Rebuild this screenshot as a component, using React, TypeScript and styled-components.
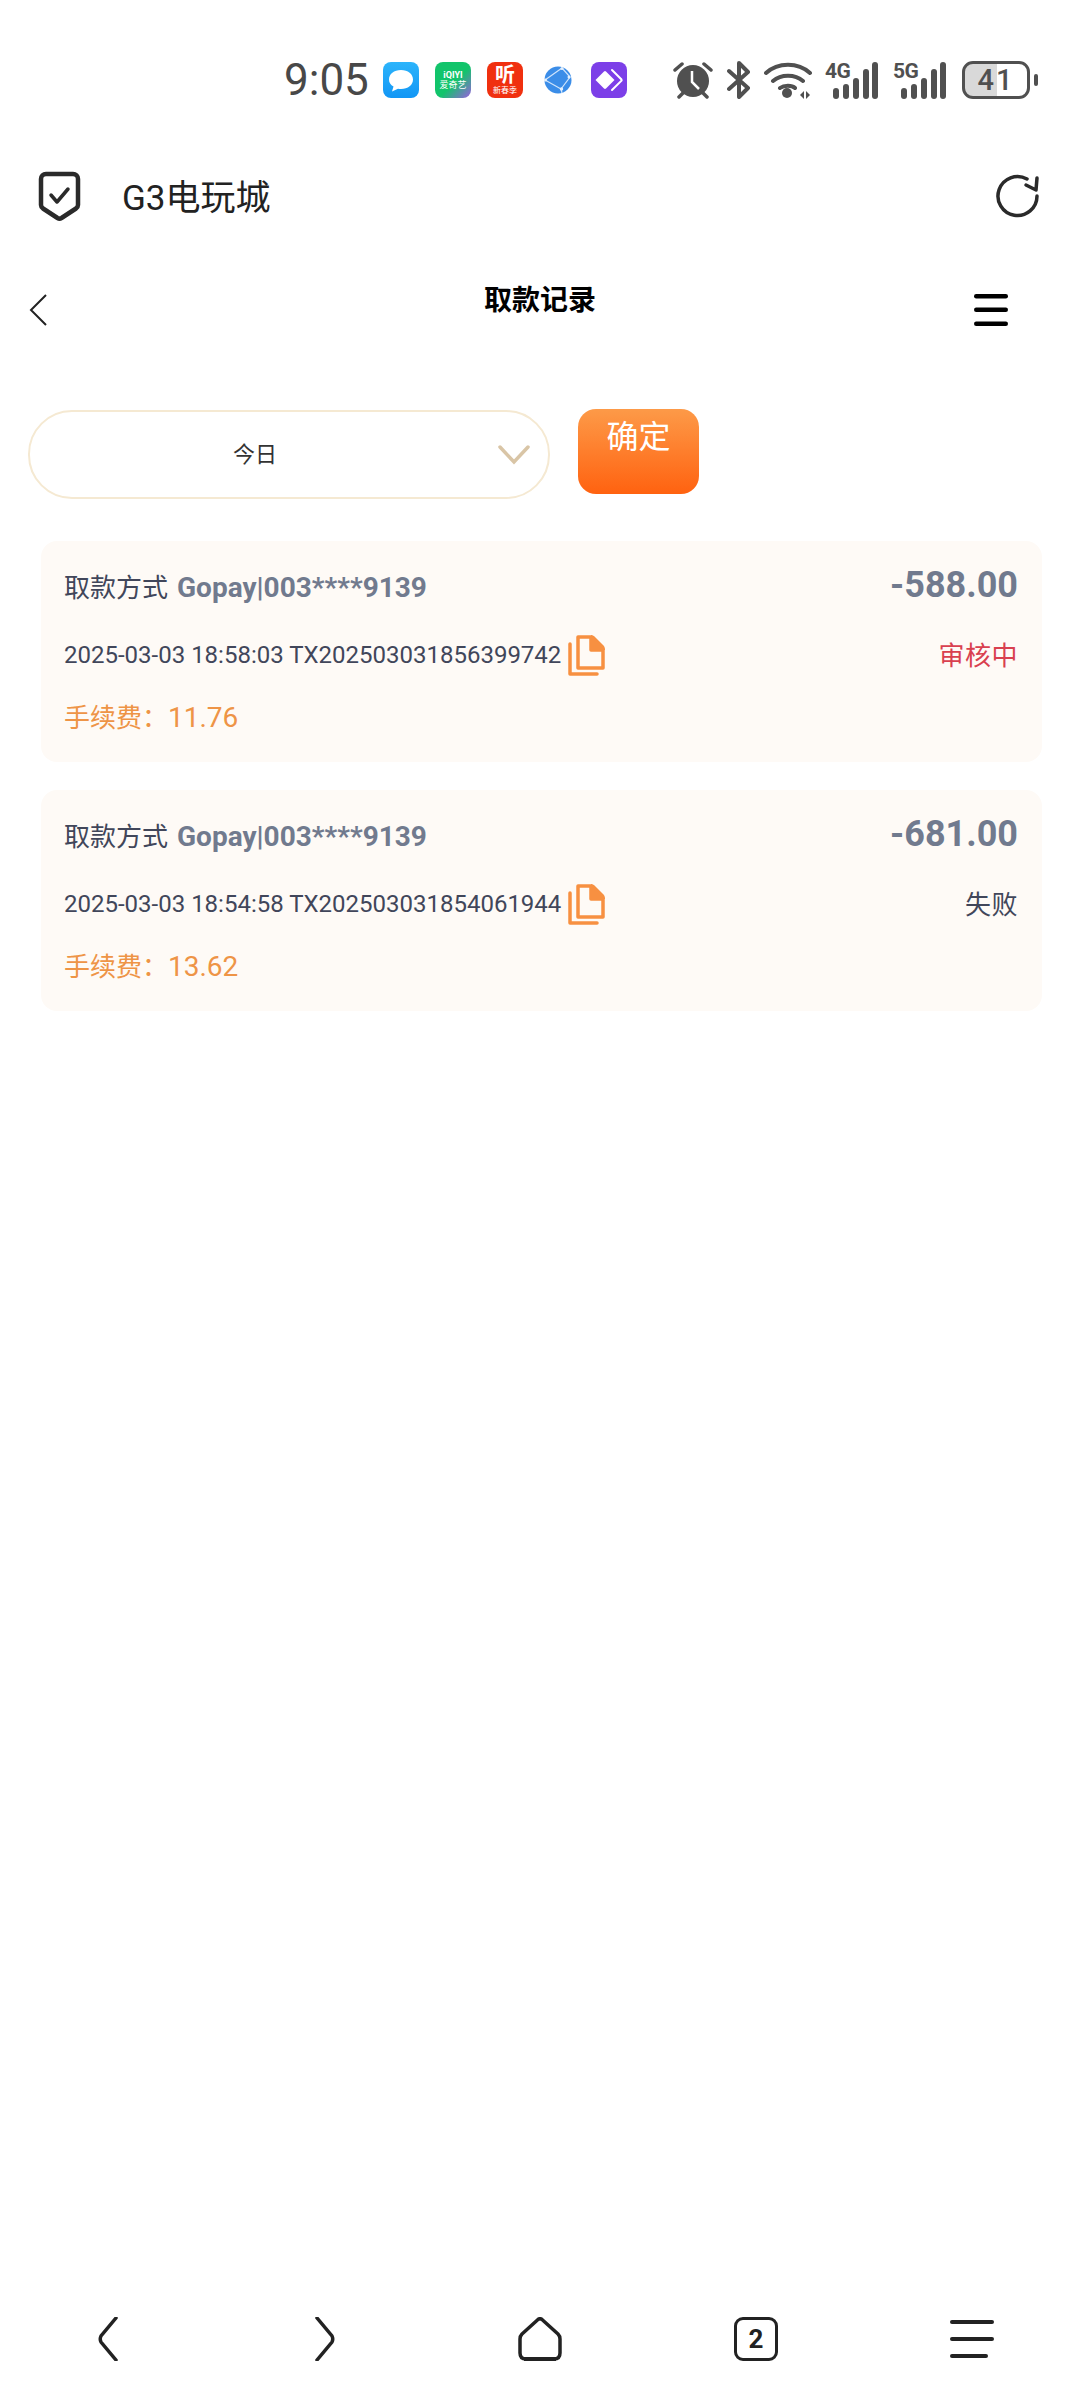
import React, {FC} from 'react';
import styled, {createGlobalStyle} from 'styled-components';

const GlobalStyle = createGlobalStyle`
  html, body {
    margin: 0;
    padding: 0;
    background: #fff;
  }
  * {
    box-sizing: border-box;
  }
`;

const FONT = `Roboto, "Noto Sans CJK SC", sans-serif`;

const Page = styled.div`
  width: 1080px;
  height: 2400px;
  display: flex;
  flex-direction: column;
  background: #fff;
  font-family: ${FONT};
  overflow: hidden;
`;

/* status bar */
const StatusBar = styled.div`
  height: 160px;
  display: flex;
  align-items: center;
  padding-left: 284px;
`;

const Clock = styled.div`
  width: 99px;
  font-size: 44px;
  line-height: 44px;
  color: #484848;
`;

const AppIcons = styled.div`
  display: flex;
  align-items: center;
`;

const AppTile = styled.div<{$bg: string; $gap?: number}>`
  width: 36px;
  height: 36px;
  border-radius: 8px;
  background: ${p => p.$bg};
  margin-right: ${p => p.$gap ?? 16}px;
  display: flex;
  flex-direction: column;
  align-items: center;
  justify-content: center;
  color: #fff;
`;

const TileMain = styled.span<{$size: number}>`
  font-size: ${p => p.$size}px;
  line-height: ${p => p.$size + 1}px;
  font-weight: 700;
`;

const TileSub = styled.span<{$size: number}>`
  font-size: ${p => p.$size}px;
  line-height: ${p => p.$size + 1}px;
`;

const SystemIcons = styled.div`
  display: flex;
  align-items: center;
  margin-left: 46px;
`;

const SysSlot = styled.div<{$gap: number}>`
  display: flex;
  margin-right: ${p => p.$gap}px;
`;

const Signal = styled.div`
  position: relative;
  width: 53px;
  height: 38px;
  display: flex;
`;

const SignalLabel = styled.span`
  position: absolute;
  left: 0;
  top: 0;
  font-size: 21px;
  line-height: 20px;
  font-weight: 700;
  letter-spacing: -0.5px;
  color: #505050;
`;

const Battery = styled.div`
  width: 68px;
  height: 38px;
  border: 3px solid #505050;
  border-radius: 11px;
  background: linear-gradient(90deg, #d9d9d9 52%, #fff 52%);
  color: #505050;
  font-size: 29px;
  line-height: 32px;
  font-weight: 500;
  letter-spacing: 2px;
  text-align: center;
`;

const BatteryNub = styled.div`
  width: 4px;
  height: 12px;
  margin-left: 4px;
  border-radius: 2px;
  background: #505050;
`;

/* browser title row */
const AppHeader = styled.div`
  height: 72px;
  display: flex;
  align-items: center;
  padding: 0 40px 0 38px;
`;

const AppTitle = styled.div`
  flex: 1;
  margin-left: 41px;
  margin-bottom: 4px;
  font-size: 35px;
  color: #222;
`;

/* page heading */
const PageHeader = styled.div`
  height: 140px;
  display: flex;
  align-items: center;
  justify-content: space-between;
  padding: 16px 72px 0 29px;
  position: relative;
`;

const PageTitle = styled.div`
  position: absolute;
  left: 0;
  right: 0;
  top: 50px;
  text-align: center;
  font-size: 28px;
  line-height: 38px;
  font-weight: 700;
  color: #000;
`;

const FilterRow = styled.div`
  display: flex;
  align-items: flex-start;
  gap: 28px;
  padding: 37px 0 0 28px;
`;

const Select = styled.div`
  width: 522px;
  height: 89px;
  margin-top: 1px;
  border: 2px solid #f5e9d2;
  border-radius: 44px;
  display: flex;
  align-items: center;
  padding: 0 18px 0 0;
`;

const SelectValue = styled.div`
  flex: 1;
  padding-right: 18px;
  padding-bottom: 6px;
  text-align: center;
  font-size: 22px;
  color: #333;
`;

const ConfirmButton = styled.button`
  width: 121px;
  height: 85px;
  border: none;
  border-radius: 18px;
  padding: 6px 0 0;
  display: flex;
  justify-content: center;
  align-items: flex-start;
  background: linear-gradient(180deg, #fd9a48 0%, #ff6210 100%);
  color: #fff;
  font-family: ${FONT};
  font-size: 32px;
  line-height: 44px;
`;

const CardList = styled.div`
  display: flex;
  flex-direction: column;
  gap: 28px;
  padding: 42px 38px 0 41px;
`;

const Card = styled.div`
  height: 221px;
  padding: 18px 24px 0 23px;
  border-radius: 16px;
  background: #fefaf6;
  display: grid;
  grid-template-rows: 52px 64px 32px;
  row-gap: 12px;
`;

const CardRow = styled.div`
  display: flex;
  align-items: center;
  justify-content: space-between;
`;

const Method = styled.div`
  font-size: 26px;
  color: #41465a;
`;

const Account = styled.span`
  margin-left: 9px;
  font-size: 28px;
  font-weight: 700;
  color: #717a8e;
`;

const Amount = styled.div`
  font-size: 36px;
  font-weight: 700;
  color: #717a8e;
`;

const Meta = styled.div`
  display: flex;
  align-items: center;
  gap: 7px;
  font-size: 24px;
  color: #41465a;
`;

const Status = styled.div<{$pending?: boolean}>`
  margin-bottom: 3px;
  font-size: 26px;
  letter-spacing: 0.5px;
  color: ${p => (p.$pending ? '#d9404f' : '#41465a')};
`;

const Fee = styled.div`
  font-size: 26px;
  color: #ee9446;
`;

const FeeValue = styled.span`
  font-size: 28px;
`;

const BottomNav = styled.div`
  margin-top: auto;
  height: 83px;
  display: flex;
  align-items: flex-start;
  padding-left: 98px;
`;

const NavSlot = styled.div<{$width: number}>`
  width: ${p => p.$width}px;
  height: 44px;
  display: flex;
`;

const TabCount = styled.div`
  width: 44px;
  height: 44px;
  border: 3px solid #222;
  border-radius: 9px;
  display: flex;
  align-items: center;
  justify-content: center;
  font-size: 26px;
  font-weight: 700;
  color: #222;
`;

/* hand drawn icons */
const MessageIcon = () => (
  <svg width="28" height="28" viewBox="0 0 28 28">
    <path d="M14 4c7 0 12 4 12 9.500S21 23 14 23c-1 0-2 0-3-.3L5 25.500l1.500-5C3.500 19 2 16.500 2 13.500 2 8 7 4 14 4z" fill="#fff" />
  </svg>
);

const GlobeIcon = () => (
  <svg width="28" height="28" viewBox="0 0 28 28">
    <circle cx="14" cy="14" r="13.500" fill="#3b8de8" />
    <path d="M1 14 18 2M1 14l16 9 9-12-8-9M17 23l1 4" stroke="#cfe4fb" strokeWidth="1.200" fill="none" />
    <circle cx="17.500" cy="23" r="1.700" fill="#e4f0fd" />
    <circle cx="25" cy="11" r="1.500" fill="#e4f0fd" />
    <circle cx="18" cy="2.500" r="1.500" fill="#e4f0fd" />
    <circle cx="1.500" cy="14" r="1.500" fill="#e4f0fd" />
  </svg>
);

const DiamondIcon = () => (
  <svg width="36" height="36" viewBox="0 0 36 36">
    <path d="M4.500 18 13 9.500a1.500 1.500 0 0 1 2 0L23.500 18 15 26.500a1.500 1.500 0 0 1-2 0z" fill="#fff" />
    <path d="M21 8l9.500 9.500a1 1 0 0 1 0 1.200L21 28" stroke="#fff" strokeWidth="2" fill="none" strokeLinecap="round" />
  </svg>
);

const AlarmIcon = () => (
  <svg width="40" height="38" viewBox="0 0 40 38" fill="none">
    <circle cx="20" cy="20" r="16" fill="#505050" />
    <path d="M19 10v11l7 7" stroke="#fff" strokeWidth="2.500" />
    <path d="M2 9l7-6M38 9l-7-6M6 36l4-4M34 36l-4-4" stroke="#505050" strokeWidth="3.500" strokeLinecap="round" />
  </svg>
);

const BluetoothIcon = () => (
  <svg width="24" height="38" viewBox="0 0 24 38" fill="none">
    <path d="M2 10l19 17-9 9V2l9 9L2 28" stroke="#505050" strokeWidth="4" strokeLinejoin="round" strokeLinecap="round" />
  </svg>
);

const WifiIcon = () => (
  <svg width="48" height="38" viewBox="0 0 48 38" fill="none">
    <path d="M2 12c12-11 32-11 44 0M9 20c8-7 22-7 30 0M16 27c4-3 12-3 15 0" stroke="#505050" strokeWidth="4" strokeLinecap="round" />
    <circle cx="23" cy="32" r="5" fill="#505050" />
    <path d="M36 34l4-4v8zM42 30l4 4-4 4z" fill="#505050" />
  </svg>
);

const SignalIcon: FC<{label: string}> = ({label}) => (
  <Signal>
    <svg width="53" height="38" viewBox="0 0 53 38">
      <rect x="8" y="27" width="6" height="11" rx="3" fill="#505050" />
      <rect x="18" y="23" width="6" height="15" rx="3" fill="#505050" />
      <rect x="28" y="17" width="6" height="21" rx="3" fill="#505050" />
      <rect x="38" y="8" width="6" height="30" rx="3" fill="#505050" />
      <rect x="47" y="1" width="6" height="37" rx="3" fill="#505050" />
    </svg>
    <SignalLabel>{label}</SignalLabel>
  </Signal>
);

const ShieldIcon = () => (
  <svg width="43" height="51" viewBox="0 0 43 51" fill="none">
    <path d="M8 3h27a5 5 0 0 1 5 5v26q0 2-2 3.500L23.500 47q-2 1.200-4 0L5 37.500Q3 36 3 34V8a5 5 0 0 1 5-5z" stroke="#2a2a2a" strokeWidth="4.500" strokeLinejoin="round" />
    <path d="M13 24l6 7 11-13" stroke="#2a2a2a" strokeWidth="3.500" strokeLinecap="round" strokeLinejoin="round" />
  </svg>
);

const RefreshIcon = () => (
  <svg width="44" height="44" viewBox="0 0 44 44" fill="none">
    <path d="M41 22A19.500 19.500 0 1 1 31 5" stroke="#2a2a2a" strokeWidth="3.500" strokeLinecap="round" />
    <path d="M41 4l-1 12-10-5" stroke="#2a2a2a" strokeWidth="3.500" strokeLinecap="round" strokeLinejoin="round" />
  </svg>
);

const BackChevron = () => (
  <svg width="18" height="32" viewBox="0 0 18 32" fill="none">
    <path d="M17 1 2 16l15 15" stroke="#222" strokeWidth="2" />
  </svg>
);

const MenuIcon = () => (
  <svg width="34" height="32" viewBox="0 0 34 32">
    <rect y="0" width="34" height="4.500" rx="2.200" fill="#000" />
    <rect y="13.500" width="34" height="4.500" rx="2.200" fill="#000" />
    <rect y="27.500" width="34" height="4.500" rx="2.200" fill="#000" />
  </svg>
);

const SelectChevron = () => (
  <svg width="32" height="20" viewBox="0 0 32 20" fill="none">
    <path d="M2 2l14 15L30 2" stroke="#d9c5a6" strokeWidth="3.500" strokeLinecap="round" />
  </svg>
);

// page with a folded corner over a second sheet
const CopyIcon = () => (
  <svg width="37" height="41" viewBox="0 0 37 41" fill="none">
    <path d="M2 9v30h27" stroke="#f79041" strokeWidth="3.500" strokeLinecap="round" strokeLinejoin="round" />
    <path d="M10 2h13v13h12v18H10z" stroke="#f79041" strokeWidth="3.500" strokeLinejoin="round" />
    <path d="M23 0c2 0 3 1 4 2l8 8c1 1 2 2 2 5H23z" fill="#f79041" />
  </svg>
);

const NavBack = () => (
  <svg width="20" height="44" viewBox="0 0 20 44" fill="none">
    <path d="M18 1 3 19q-1.500 3 0 6l15 18" stroke="#222" strokeWidth="3.500" strokeLinecap="round" />
  </svg>
);

const NavForward = () => (
  <svg width="20" height="44" viewBox="0 0 20 44" fill="none">
    <path d="M2 1l15 18q1.500 3 0 6L2 43" stroke="#222" strokeWidth="3.500" strokeLinecap="round" />
  </svg>
);

const NavHome = () => (
  <svg width="44" height="44" viewBox="0 0 44 44" fill="none">
    <path d="M20 2.500 4 17q-2 2-2 5v14q0 6 6 6h28q6 0 6-6V22q0-3-2-5L24 2.500q-2-1.500-4 0z" stroke="#222" strokeWidth="3.500" strokeLinejoin="round" />
    <path d="M6 42h32" stroke="#222" strokeWidth="4" />
  </svg>
);

const NavMenu = () => (
  <svg width="44" height="44" viewBox="0 0 44 44">
    <rect y="3" width="44" height="4" rx="2" fill="#222" />
    <rect y="20" width="44" height="4" rx="2" fill="#222" />
    <rect y="37" width="38" height="4" rx="2" fill="#222" />
  </svg>
);

type Withdrawal = {
  amount: string;
  time: string;
  orderNo: string;
  status: string;
  pending?: boolean;
  fee: string;
};

const records: Withdrawal[] = [
  {amount: '-588.00', time: '2025-03-03 18:58:03', orderNo: 'TX202503031856399742', status: '审核中', pending: true, fee: '11.76'},
  {amount: '-681.00', time: '2025-03-03 18:54:58', orderNo: 'TX202503031854061944', status: '失败', fee: '13.62'},
];

const RecordCard: FC<{record: Withdrawal}> = ({record}) => (
  <Card>
    <CardRow>
      <Method>取款方式<Account>Gopay|003****9139</Account></Method>
      <Amount>{record.amount}</Amount>
    </CardRow>
    <CardRow>
      <Meta>{record.time} {record.orderNo}<CopyIcon /></Meta>
      <Status $pending={record.pending}>{record.status}</Status>
    </CardRow>
    <CardRow>
      <Fee>手续费：<FeeValue>{record.fee}</FeeValue></Fee>
    </CardRow>
  </Card>
);

const App: FC = () => (
  <Page>
    <GlobalStyle />
    <StatusBar>
      <Clock>9:05</Clock>
      <AppIcons>
        <AppTile $bg="linear-gradient(180deg, #2cb4fb, #1296f5)"><MessageIcon /></AppTile>
        <AppTile $bg="linear-gradient(135deg, #12c46b 55%, #9a5fe0)">
          <TileMain $size={9}>iQIYI</TileMain>
          <TileSub $size={9}>爱奇艺</TileSub>
        </AppTile>
        <AppTile $bg="#f0300f" $gap={17}>
          <TileMain $size={20}>听</TileMain>
          <TileSub $size={8}>新春季</TileSub>
        </AppTile>
        <AppTile $bg="transparent" $gap={15}><GlobeIcon /></AppTile>
        <AppTile $bg="#7c3fe8" $gap={0}><DiamondIcon /></AppTile>
      </AppIcons>
      <SystemIcons>
        <SysSlot $gap={14}><AlarmIcon /></SysSlot>
        <SysSlot $gap={13}><BluetoothIcon /></SysSlot>
        <SysSlot $gap={13}><WifiIcon /></SysSlot>
        <SysSlot $gap={15}><SignalIcon label="4G" /></SysSlot>
        <SysSlot $gap={16}><SignalIcon label="5G" /></SysSlot>
        <Battery>41</Battery>
        <BatteryNub />
      </SystemIcons>
    </StatusBar>

    <AppHeader>
      <ShieldIcon />
      <AppTitle>G3电玩城</AppTitle>
      <RefreshIcon />
    </AppHeader>

    <PageHeader>
      <BackChevron />
      <PageTitle>取款记录</PageTitle>
      <MenuIcon />
    </PageHeader>

    <FilterRow>
      <Select>
        <SelectValue>今日</SelectValue>
        <SelectChevron />
      </Select>
      <ConfirmButton>确定</ConfirmButton>
    </FilterRow>

    <CardList>
      {records.map(r => <RecordCard key={r.orderNo} record={r} />)}
    </CardList>

    <BottomNav>
      <NavSlot $width={217}><NavBack /></NavSlot>
      <NavSlot $width={203}><NavForward /></NavSlot>
      <NavSlot $width={216}><NavHome /></NavSlot>
      <NavSlot $width={216}><TabCount>2</TabCount></NavSlot>
      <NavSlot $width={44}><NavMenu /></NavSlot>
    </BottomNav>
  </Page>
);

export default App;
